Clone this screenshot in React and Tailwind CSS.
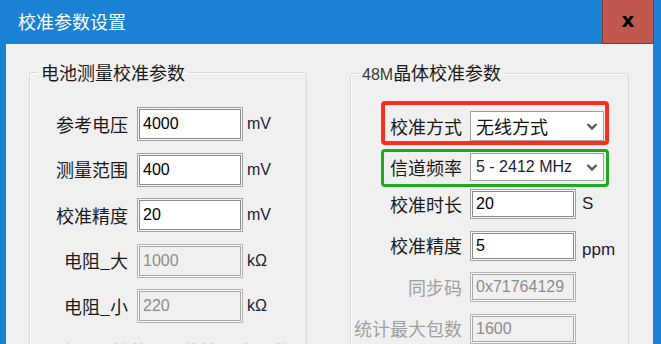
import React from "react";

const CJK = { fontFamily: '"Noto Sans CJK SC", "Liberation Sans", sans-serif' };

const boxCls =
  "bg-white border border-[#a3a3a3] shadow-[inset_0_0_0_1px_#f7f7f7,inset_0_0_0_2px_#8a8a8a]";
const offCls =
  "bg-[#f0f0f0] border border-[#b5b5b5] shadow-[inset_0_0_0_1px_#f7f7f7,inset_0_0_0_2px_#a8a8a8]";

function Field({ value, disabled, h }) {
  return (
    <div
      className={`w-[106px] ${h} flex items-center px-[5px] text-[16px] font-['Liberation_Sans',sans-serif] ${
        disabled ? offCls + " text-[#8c8c8c]" : boxCls + " text-black"
      }`}
    >
      {value}
    </div>
  );
}

function Chevron() {
  return (
    <svg width="12" height="9" viewBox="0 0 12 9" className="ml-auto mr-[5px]">
      <path d="M1.5 2 L6 6.5 L10.5 2" fill="none" stroke="#5a5a5a" strokeWidth="2.4" />
    </svg>
  );
}

function LeftRow({ label, value, unit, disabled }) {
  return (
    <div className="flex items-center">
      <span className="w-[98px] text-right text-[18px] text-[#1a1a1a]" style={CJK}>{label}</span>
      <div className="ml-[9px]">
        <Field value={value} disabled={disabled} h="h-[34px]" />
      </div>
      <span className="ml-[4px] text-[16px] text-[#1c1c3a] font-['Liberation_Sans',sans-serif]">{unit}</span>
    </div>
  );
}

function RightRow({ label, value, unit, disabled, low }) {
  return (
    <div className="flex items-center">
      <span
        className={`w-[111px] text-right text-[18px] ${disabled ? "text-[#a0a0a0]" : "text-[#1a1a1a]"}`}
        style={CJK}
      >
        {label}
      </span>
      <div className="ml-[8px]">
        <Field value={value} disabled={disabled} h="h-[30px]" />
      </div>
      <span
        className={`ml-[6px] text-[17px] text-[#1c1c3a] font-['Liberation_Sans',sans-serif] ${low ? "self-end -mb-[2px]" : ""}`}
      >
        {unit}
      </span>
    </div>
  );
}

export default function App() {
  return (
    <div className="w-[661px] h-[344px] overflow-hidden bg-[#1a82d4] flex flex-col" style={CJK}>
      <div className="h-[44px] flex shrink-0">
        <div className="pl-[18px] pt-[8px] text-[18px] text-white">校准参数设置</div>
        <div className="ml-auto mr-[7px] w-[52px] h-[44px] bg-[#c1584f] border border-t-0 border-[#7e3b35] flex items-center justify-center">
          <span className="text-[20px] font-bold text-black font-['DejaVu_Sans',sans-serif] leading-none -mt-[3px]">x</span>
        </div>
      </div>
      <div className="flex-1 ml-[6px] mr-[8px] bg-[#f0f0f0] flex items-start pl-[23px] pt-[16px] gap-[43px] overflow-hidden">
        <fieldset className="w-[278px] h-[320px] shrink-0 border border-[#d9d9d9] rounded-[3px] px-0 shadow-[inset_1px_1px_0_#fff]">
          <legend className="ml-[8px] px-[3px] text-[18px] leading-[24px] text-[#1a1a1a]">电池测量校准参数</legend>
          <div className="flex flex-col gap-[11.5px] pt-[23px]">
            <LeftRow label="参考电压" value="4000" unit="mV" />
            <LeftRow label="测量范围" value="400" unit="mV" />
            <LeftRow label="校准精度" value="20" unit="mV" />
            <LeftRow label="电阻_大" value="1000" unit="kΩ" disabled />
            <LeftRow label="电阻_小" value="220" unit="kΩ" disabled />
          </div>
          <div className="mt-[15px] pl-[27px] text-[18px] text-[#b4b4b4] whitespace-nowrap">注：调整范围只能按要求调整</div>
        </fieldset>
        <fieldset className="w-[279px] h-[320px] shrink-0 border border-[#d9d9d9] rounded-[3px] px-0 shadow-[inset_1px_1px_0_#fff]">
          <legend className="ml-[8px] px-[3px] text-[18px] leading-[24px] text-[#1a1a1a]">
            <span className="text-[16px] text-[#3a3a3a] font-['Liberation_Sans',sans-serif]">48M</span>晶体校准参数
          </legend>
          <div className="ml-[30px] mt-[14px] w-[228px]">
            <div className="h-[44px] border-[4px] border-[#ff2d1e] rounded-[4px] flex items-end pl-[5px] pr-px">
              <span className="text-[18px] text-[#1a1a1a] leading-[30px] w-[72px]">校准方式</span>
              <div className="ml-[8px] w-[134px] h-[30px] bg-white border border-[#a0a0a0] flex items-center pl-[5px]">
                <span className="text-[18px] text-[#111]">无线方式</span>
                <Chevron />
              </div>
            </div>
            <div className="mt-[4px] h-[38px] border-[3px] border-[#1eaa1e] rounded-[4px] flex items-start pt-px pl-[6px] pr-[2px]">
              <span className="text-[18px] text-[#1a1a1a] leading-[28px] w-[72px]">信道频率</span>
              <div className="ml-[8px] w-[134px] h-[28px] bg-white border border-[#a0a0a0] flex items-center pl-[5px]">
                <span className="text-[16px] text-[#1c1c3a] font-['Liberation_Sans',sans-serif]">5 - 2412 MHz</span>
                <Chevron />
              </div>
            </div>
          </div>
          <div className="flex flex-col gap-[11.5px] mt-[2px]">
            <RightRow label="校准时长" value="20" unit="S" />
            <RightRow label="校准精度" value="5" unit="ppm" low />
            <RightRow label="同步码" value="0x71764129" disabled />
            <RightRow label="统计最大包数" value="1600" disabled />
          </div>
        </fieldset>
      </div>
    </div>
  );
}
